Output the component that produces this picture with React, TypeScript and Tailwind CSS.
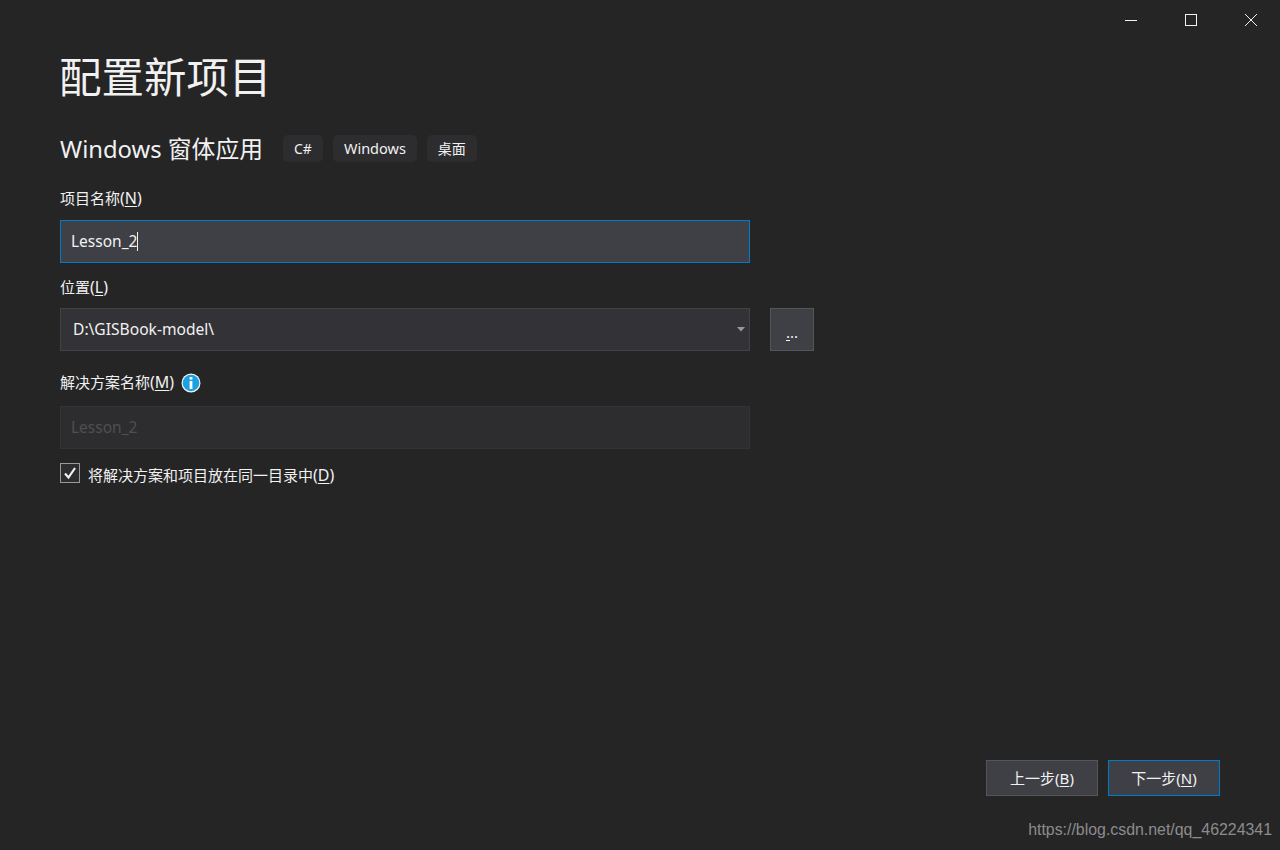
const cjk = "font-['Noto_Sans','Noto_Sans_CJK_SC',sans-serif]"

function Label({ text, hot }: { text: string; hot: string }) {
	return (
		<span className="text-[15px] leading-[20px] text-[#f1f1f1]">
			{text}
			<span className="text-[16px]">(<span className="underline underline-offset-2">{hot}</span>)</span>
		</span>
	)
}

function Chip({ text, small }: { text: string; small?: boolean }) {
	return (
		<span className={`h-[27px] px-[11px] flex items-center rounded-[5px] bg-[#2d2d30] text-[#f1f1f1] ${small ? 'text-[14px]' : 'text-[14.5px]'}`}>
			{text}
		</span>
	)
}

function WindowButtons() {
	return (
		<div className="h-[40px] -mr-px flex justify-end">
			<button className="w-[60px] h-[40px] flex items-center justify-center">
				<svg width="14" height="14" viewBox="0 0 14 14"><path d="M1 7.5h12" stroke="#f1f1f1" fill="none" /></svg>
			</button>
			<button className="w-[60px] h-[40px] flex items-center justify-center">
				<svg width="14" height="14" viewBox="0 0 14 14"><rect x="1.5" y="1.5" width="11" height="11" stroke="#f1f1f1" fill="none" /></svg>
			</button>
			<button className="w-[60px] h-[40px] flex items-center justify-center">
				<svg width="14" height="14" viewBox="0 0 14 14"><path d="M1 1l12 12M13 1L1 13" stroke="#f1f1f1" fill="none" /></svg>
			</button>
		</div>
	)
}

export default function App() {
	return (
		<div className={`relative h-[850px] w-[1280px] overflow-hidden flex flex-col bg-[#252526] text-[#f1f1f1] ${cjk}`}>
			<WindowButtons />

			<div className="flex-1 px-[60px]">
				<h1 className="h-[76px] pt-[7px] text-[42.5px] leading-[60px] font-normal -ml-px">配置新项目</h1>

				<div className="mt-[19px] h-[27px] flex items-center">
					<h2 className="w-[205px] text-[23.8px] leading-[32px] font-normal">Windows 窗体应用</h2>
					<div className="ml-[18px] flex gap-[10px]">
						<Chip text="C#" small />
						<Chip text="Windows" />
						<Chip text="桌面" small />
					</div>
				</div>

				<div className="mt-[26px] h-[20px] flex items-center">
					<Label text="项目名称" hot="N" />
				</div>
				<div className="mt-[12px] w-[690px] h-[43px] pl-[10px] flex items-center border border-[#007acc] bg-[#3f3f46] text-[15.5px]">
					Lesson_2
					<span className="w-px h-[19px] bg-[#f1f1f1]" />
				</div>

				<div className="mt-[14px] h-[20px] flex items-center">
					<Label text="位置" hot="L" />
				</div>
				<div className="mt-[11px] flex gap-[20px]">
					<div className="w-[690px] h-[43px] pl-[12px] pr-[4px] flex items-center justify-between border border-[#434346] bg-[#333337] text-[15.6px]">
						D:\GISBook-model\
						<svg width="8" height="5" viewBox="0 0 8 5"><path d="M0 0h8L4 4.5z" fill="#999999" /></svg>
					</div>
					<button className="w-[44px] h-[43px] border border-[#555555] bg-[#3f3f46] text-[15px] leading-[46px] text-[#f1f1f1]">
						<span className="underline underline-offset-2">.</span>..
					</button>
				</div>

				<div className="mt-[21px] h-[22px] flex items-center gap-[7px]">
					<span className="-mt-[2px]"><Label text="解决方案名称" hot="M" /></span>
					<svg width="20" height="20" viewBox="0 0 20 20">
						<circle cx="10" cy="10" r="9.5" fill="#f4f4f4" />
						<circle cx="10" cy="10" r="8.3" fill="#1ba1e2" />
						<rect x="8.6" y="4" width="2.8" height="2.6" fill="#ffffff" />
						<rect x="8.6" y="8" width="2.8" height="8" fill="#ffffff" />
					</svg>
				</div>
				<div className="mt-[12px] w-[690px] h-[43px] pl-[10px] flex items-center border border-[#333337] bg-[#2d2d30] text-[15.5px] text-[#4f4f52]">
					Lesson_2
				</div>

				<div className="mt-[14px] h-[20px] flex items-center gap-[8px]">
					<div className="w-[20px] h-[20px] flex items-center justify-center border border-[#999999] bg-[#2d2d30]">
						<svg width="14" height="14" viewBox="0 0 14 14"><path d="M2 7.5l3.5 4L12 2" stroke="#f1f1f1" strokeWidth="2.2" fill="none" /></svg>
					</div>
					<span className="mt-[3px]"><Label text="将解决方案和项目放在同一目录中" hot="D" /></span>
				</div>
			</div>

			<div className="px-[60px] pb-[54px] flex justify-end gap-[10px]">
				<button className="w-[112px] h-[36px] border border-[#555555] bg-[#3f3f46] text-[15px]">
					上一步(<span className="underline underline-offset-2">B</span>)
				</button>
				<button className="w-[112px] h-[36px] border border-[#007acc] bg-[#3f3f46] text-[15px]">
					下一步(<span className="underline underline-offset-2">N</span>)
				</button>
			</div>

			<span className="absolute right-[8px] top-[821px] font-['Liberation_Sans',sans-serif] text-[15.9px] leading-[18px] text-[#8c8c8c]">
				https://blog.csdn.net/qq_46224341
			</span>
		</div>
	)
}
